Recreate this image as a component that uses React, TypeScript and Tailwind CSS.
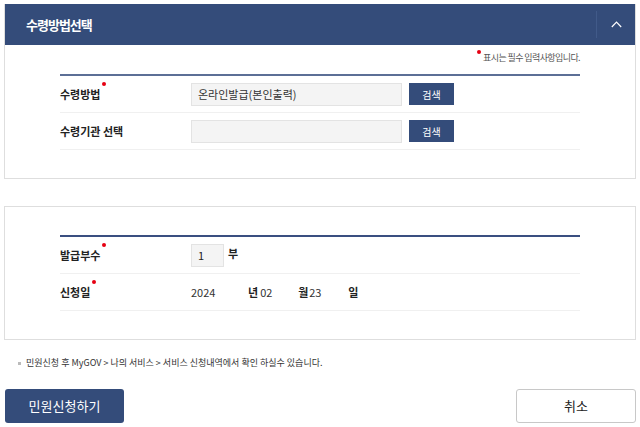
import React from 'react';

const font = { fontFamily: '"Noto Sans CJK KR", "Noto Sans", Roboto, sans-serif' };

const Dot = () => <span className="absolute -right-[6px] -top-[4px] h-[4px] w-[4px] rounded-full bg-[#e60012]" />;

const Label: React.FC<{ text: string; required?: boolean }> = ({ text, required }) => (
  <div className="w-[131px] shrink-0 text-[11px] leading-[14px]">
    <span className="relative font-bold text-[#222]">
      {text}
      {required && <Dot />}
    </span>
  </div>
);

const SearchButton = () => (
  <button className="ml-[7px] h-[22px] w-[45px] bg-[#344c7a] text-[10px] text-white">검색</button>
);

export default function App() {
  return (
    <div className="w-[640px] h-[427px] overflow-hidden bg-white px-[4px] pt-[4px]" style={font}>
      {/* 수령방법선택 */}
      <div className="border border-t-0 border-[#dedede]">
        <div className="flex h-[41px] items-center bg-[#344c7a] pl-[21px]">
          <h2 className="flex-1 text-[13px] font-bold tracking-[-1px] text-white">수령방법선택</h2>
          <div className="flex h-[27px] w-[39px] items-center justify-center border-l border-[#415a89]">
            <svg width="11" height="7" viewBox="0 0 11 7" fill="none">
              <path d="M0.8 6 5.5 1.2 10.2 6" stroke="#ffffff" strokeWidth="1.2" />
            </svg>
          </div>
        </div>
        <div className="px-[55px] pt-[7px] pb-[28px]">
          <p className="flex justify-end text-[9px] leading-[12px] tracking-[-0.6px] text-[#555]">
            <span className="relative">
              <span className="absolute -left-[6px] -top-[2px] h-[4px] w-[4px] rounded-full bg-[#e60012]" />
              표시는 필수 입력사항입니다.
            </span>
          </p>
          <div className="mt-[10px] border-t-2 border-[#5c6f96]">
            <div className="flex h-[37px] items-center border-b border-[#f0f0f0]">
              <Label text="수령방법" required />
              <div className="flex h-[23px] w-[211px] items-center border border-[#e3e3e3] bg-[#f4f4f4] px-[6px] text-[11px] text-[#333]">
                온라인발급(본인출력)
              </div>
              <SearchButton />
            </div>
            <div className="flex h-[37px] items-center border-b border-[#f0f0f0]">
              <Label text="수령기관 선택" />
              <div className="h-[23px] w-[211px] border border-[#e3e3e3] bg-[#f4f4f4]" />
              <SearchButton />
            </div>
          </div>
        </div>
      </div>

      {/* 발급정보 */}
      <div className="mt-[27px] border border-[#dedede] px-[55px] pt-[28px] pb-[28px]">
        <div className="border-t-2 border-[#3a4f80]">
          <div className="flex h-[37px] items-center border-b border-[#f0f0f0]">
            <Label text="발급부수" required />
            <div className="flex h-[23px] w-[33px] items-center border border-[#e3e3e3] bg-[#f4f4f4] px-[6px] text-[11px] text-[#222]">
              1
            </div>
            <span className="ml-[4px] -mt-[3px] text-[11px] font-bold text-[#222]">부</span>
          </div>
          <div className="flex h-[37px] items-center border-b border-[#f0f0f0] text-[11px] text-[#333]">
            <Label text="신청일" required />
            <span className="w-[57px]">2024</span>
            <span className="font-bold text-[#222]">년</span>
            <span className="ml-[2px] w-[38px]">02</span>
            <span className="font-bold text-[#222]">월</span>
            <span className="ml-[1px] w-[39px]">23</span>
            <span className="font-bold text-[#222]">일</span>
          </div>
        </div>
      </div>

      <p className="mt-[17px] flex items-center pl-[14px] text-[9px] leading-[12px] text-[#333]">
        <span className="mr-[5px] h-[3px] w-[3px] bg-[#bbbbbb]" />
        민원신청 후 MyGOV &gt; 나의 서비스 &gt; 서비스 신청내역에서 확인 하실수 있습니다.
      </p>

      <div className="mt-[20px] flex items-center justify-between pl-[1px]">
        <button className="h-[34px] w-[119px] rounded-[3px] bg-[#344c7a] text-[13px] text-white">민원신청하기</button>
        <button className="h-[34px] w-[120px] rounded-[3px] border border-[#c8c8c8] bg-white text-[13px] text-[#222]">취소</button>
      </div>
    </div>
  );
}
